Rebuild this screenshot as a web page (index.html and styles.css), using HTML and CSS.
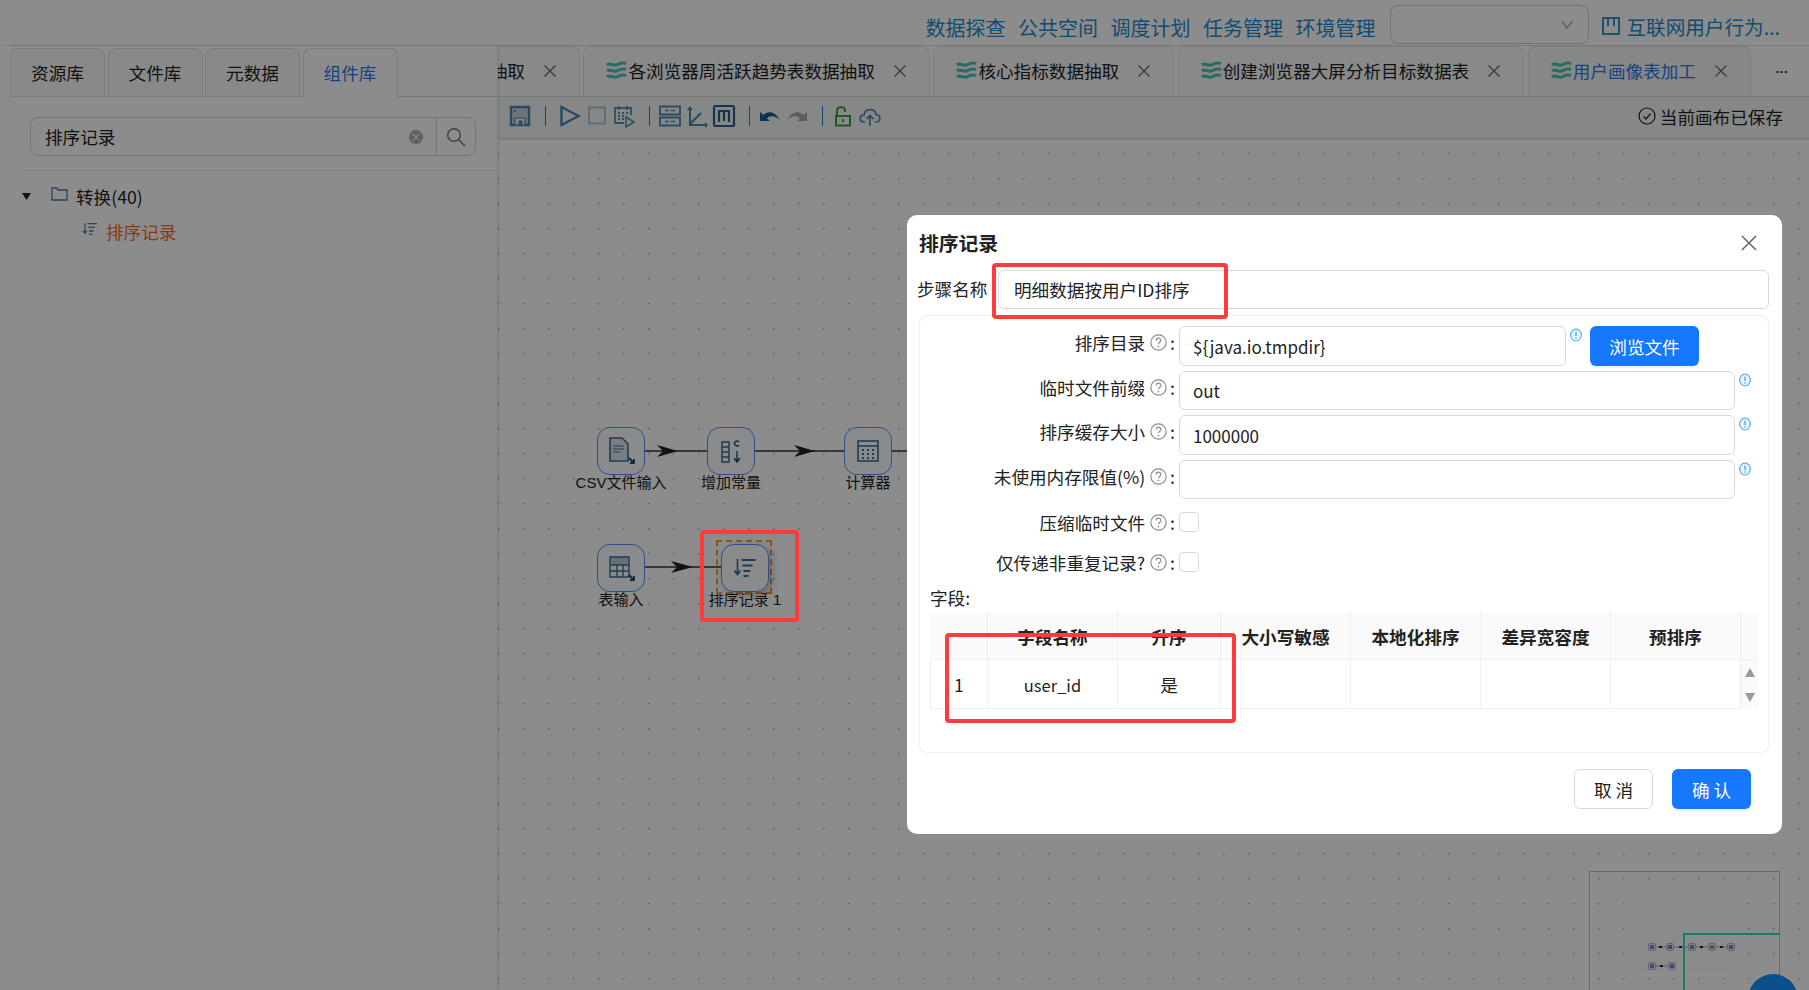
FILE: index.html
```html
<!DOCTYPE html>
<html lang="zh-CN">
<head>
<meta charset="utf-8">
<title>排序记录</title>
<link rel="stylesheet" href="styles.css">
</head>
<body>
<svg class="defs" width="0" height="0">
  <defs>
    <symbol id="wave" viewBox="0 0 21 21">
      <path d="M1 5c3-3 6 1.500 9.500 0S16 2 20 3.500M1 11c3-3 6 1.500 9.500 0S16 8 20 9.500M1 17c3-3 6 1.500 9.500 0s5.500-3 9.500-1.500" fill="none" stroke="#4fc4b4" stroke-width="3.200"/>
    </symbol>
    <symbol id="help" viewBox="0 0 16 16">
      <circle cx="8" cy="8" r="7.200" fill="none" stroke="#8c8c8c" stroke-width="1.100"/>
      <path d="M5.800 6.200c0-3 4.500-3 4.500-.2 0 1.800-2.300 1.700-2.300 3.600" fill="none" stroke="#8c8c8c" stroke-width="1.100"/>
      <circle cx="8" cy="11.800" r=".8" fill="#8c8c8c"/>
    </symbol>
    <symbol id="info" viewBox="0 0 12 14">
      <ellipse cx="6" cy="7" rx="5.300" ry="6" fill="#e8f4ff" stroke="#4aa3f5" stroke-width="1.100"/>
      <path d="M6 3.500v4.500" stroke="#4aa3f5" stroke-width="1.300"/>
      <circle cx="6" cy="10" r=".8" fill="#4aa3f5"/>
    </symbol>
    <symbol id="close" viewBox="0 0 14 14">
      <path d="M1.500 1.500l11 11M12.500 1.500l-11 11" stroke="#666" stroke-width="1.200" fill="none"/>
    </symbol>
    <symbol id="sorti" viewBox="0 0 24 24">
      <path d="M4.500 3v15M1.500 14.500l3 4 3-4" fill="none" stroke="currentColor" stroke-width="1.700"/>
      <path d="M8.500 4h14M9.500 9.500h10M10.500 15h7M10.500 20h5" fill="none" stroke="currentColor" stroke-width="1.900"/>
    </symbol>
  </defs>
</svg>

<div class="page">
  <header class="topbar">
    <nav class="topnav">
      <a>数据探查</a><a>公共空间</a><a>调度计划</a><a>任务管理</a><a>环境管理</a>
    </nav>
    <div class="select">
      <svg width="14" height="9" viewBox="0 0 14 9"><path d="M1.500 1l5.500 7 5.500-7" fill="none" stroke="#aaa" stroke-width="1.300"/></svg>
    </div>
    <div class="project">
      <svg width="18" height="18" viewBox="0 0 18 18"><rect x="1" y="1" width="16" height="16" fill="none" stroke="currentColor" stroke-width="1.800"/><path d="M6 1v8M12 1v8" stroke="currentColor" stroke-width="1.800"/></svg>
      <span>互联网用户行为...</span>
    </div>
  </header>

  <div class="workspace">
    <aside class="side">
      <div class="side-tabs">
        <div class="stab">资源库</div>
        <div class="stab">文件库</div>
        <div class="stab">元数据</div>
        <div class="stab on">组件库</div>
      </div>
      <div class="search">
        <span class="search-text">排序记录</span>
        <span class="search-clear">×</span>
        <span class="search-btn">
          <svg width="20" height="20" viewBox="0 0 20 20"><circle cx="8" cy="8" r="6.300" fill="none" stroke="#777" stroke-width="1.500"/><path d="M12.500 12.500l6.500 6.500" stroke="#777" stroke-width="1.500"/></svg>
        </span>
      </div>
      <div class="side-rule"></div>
      <div class="tree">
        <div class="tree-row">
          <svg class="caret" width="9" height="7" viewBox="0 0 9 7"><path d="M0 0h9L4.500 7z" fill="#222"/></svg>
          <svg class="folder" width="17" height="14" viewBox="0 0 17 14"><path d="M1 13V1h5l1 2h9v10z" fill="none" stroke="#4d7ea8" stroke-width="1.300"/></svg>
          <span>转换(40)</span>
        </div>
        <div class="tree-row leaf">
          <svg class="leaf-icon" width="16" height="16"><use href="#sorti"/></svg>
          <span>排序记录</span>
        </div>
      </div>
    </aside>

    <main class="main">
      <div class="tabs">
        <div class="tab first"><span class="tab-text">数据抽取</span><svg class="x" width="14" height="14"><use href="#close"/></svg></div>
        <div class="tab"><svg width="21" height="21"><use href="#wave"/></svg><span class="tab-text">各浏览器周活跃趋势表数据抽取</span><svg class="x" width="14" height="14"><use href="#close"/></svg></div>
        <div class="tab"><svg width="21" height="21"><use href="#wave"/></svg><span class="tab-text">核心指标数据抽取</span><svg class="x" width="14" height="14"><use href="#close"/></svg></div>
        <div class="tab"><svg width="21" height="21"><use href="#wave"/></svg><span class="tab-text">创建浏览器大屏分析目标数据表</span><svg class="x" width="14" height="14"><use href="#close"/></svg></div>
        <div class="tab on"><svg width="21" height="21"><use href="#wave"/></svg><span class="tab-text">用户画像表加工</span><svg class="x" width="14" height="14"><use href="#close"/></svg></div>
        <span class="more">···</span>
      </div>

      <div class="toolbar">
        <svg class="ti" viewBox="0 0 24 24"><path d="M3 3h18v18H3z" fill="#c9d8e2" stroke="#4e86b2" stroke-width="2.400"/><path d="M7 14h10v7H7z" fill="#f4f8f6" stroke="#4e86b2" stroke-width="1.200"/><path d="M10.500 16.500h4v4.500h-4z" fill="#4e86b2"/><path d="M6 6h2v2H6z" fill="#4e86b2"/></svg>
        <i class="sep first"></i>
        <svg class="ti" viewBox="0 0 24 24"><path d="M3.500 3l17 9-17 9z" fill="none" stroke="#4e86b2" stroke-width="2.400"/></svg>
        <svg class="ti" viewBox="0 0 24 24"><rect x="4" y="3.500" width="16" height="16" fill="none" stroke="#b0c4d2" stroke-width="2"/></svg>
        <svg class="ti" viewBox="0 0 24 24"><path d="M12 19H3V4h16v7" fill="none" stroke="#5d8db2" stroke-width="1.800"/><path d="M7 2v4M15 2v4M6 9h2M10 9h2M14 9h2M6 12h2M10 12h2M6 15h2M10 15h2" stroke="#5d8db2" stroke-width="1.800"/><path d="M14 13l8 5-8 5z" fill="none" stroke="#5d8db2" stroke-width="1.600"/></svg>
        <i class="sep"></i>
        <svg class="ti" viewBox="0 0 24 24"><path d="M2 2.500h20v8H2zM2 13.500h20v8H2z" fill="none" stroke="#4e86b2" stroke-width="1.800"/><path d="M7 6.500h4M13 6.500h4M7 17.500h4M13 17.500h4" stroke="#4e86b2" stroke-width="1.500"/></svg>
        <svg class="ti" viewBox="0 0 24 24"><path d="M5 4v17h16M5 20L16 9" fill="none" stroke="#4e86b2" stroke-width="2"/><path d="M2 6l3-4 3 4zM20 18l3 3-3 3z" fill="#4e86b2"/></svg>
        <svg class="ti" viewBox="0 0 24 24"><rect x="2" y="2" width="20" height="20" rx="1.500" fill="none" stroke="#2a5f8a" stroke-width="2.200"/><path d="M7 18V7h10v11M12 7v10" fill="none" stroke="#2a5f8a" stroke-width="2.200"/></svg>
        <i class="sep"></i>
        <svg class="ti" viewBox="0 0 24 24"><path d="M2 17V8l3.500 3c4-4.500 12-4 16 5-4-4-9-5-12.500-1.500L12 17z" fill="#1f5a8c"/></svg>
        <svg class="ti" viewBox="0 0 24 24"><path d="M22 17V8l-3.500 3c-4-4.500-12-4-16 5 4-4 9-5 12.500-1.500L12 17z" fill="#a9a9a9"/></svg>
        <i class="sep"></i>
        <svg class="ti" viewBox="0 0 24 24"><path d="M6 12V6.500c0-4.500 8-4.500 8 0V8" fill="none" stroke="#2f9a2f" stroke-width="1.800"/><rect x="5" y="12" width="14" height="9.500" fill="none" stroke="#2f9a2f" stroke-width="1.800"/><path d="M12 15v3" stroke="#2f9a2f" stroke-width="1.800"/></svg>
        <svg class="ti" viewBox="0 0 24 24"><path d="M7 18H5.500C1 18 1 11 6 11 7 4 17 4 18 10.500c5 0 5 7.500 .5 7.500H17" fill="none" stroke="#4e86b2" stroke-width="1.700"/><path d="M12 22V12M8.500 15l3.500-3.500 3.500 3.500" fill="none" stroke="#4e86b2" stroke-width="1.700"/></svg>
        <div class="saved">
          <svg width="18" height="18" viewBox="0 0 18 18"><circle cx="9" cy="9" r="8" fill="none" stroke="#222" stroke-width="1.200"/><path d="M5.500 9.500l2.500 2.500 4.500-5.500" fill="none" stroke="#222" stroke-width="1.200"/></svg>
          <span>当前画布已保存</span>
        </div>
      </div>

      <div class="canvas">
        <svg class="edges" width="1311" height="851">
          <path d="M147 312h63M257 312h89M393 312h30M147 428h76" stroke="#333" stroke-width="1.400" fill="none"/>
          <path d="M180 312l-21-6 6 6-6 6zM317 312l-21-6 6 6-6 6zM195 428l-22-6 6 6-6 6z" fill="#222"/>
        </svg>

        <div class="node n1">
          <div class="node-box"><svg width="32" height="32" viewBox="0 0 32 32"><path d="M5 3h12l6 6v17H5z" fill="#dce6f0" stroke="#3d6c90" stroke-width="1.600"/><path d="M8 11h11M8 14h11M8 17h7" stroke="#3d6c90" stroke-width="1.200"/><path d="M24 23l5 5M29 24v4h-4" stroke="#1e4a6c" stroke-width="1.800" fill="none"/></svg></div>
          <span>CSV文件输入</span>
        </div>
        <div class="node n2">
          <div class="node-box"><svg width="32" height="32" viewBox="0 0 32 32"><path d="M7 7h7v20H7zM7 12h7M7 17h7M7 22h7" fill="none" stroke="#3d6c90" stroke-width="1.500"/><path d="M22 16v11M19 23l3 4 3-4M24 7a2.500 2.500 0 1 0 0 3" stroke="#1e4a6c" stroke-width="1.400" fill="none"/></svg></div>
          <span>增加常量</span>
        </div>
        <div class="node n3">
          <div class="node-box"><svg width="32" height="32" viewBox="0 0 32 32"><rect x="6" y="6" width="20" height="20" fill="none" stroke="#3d6c90" stroke-width="1.600"/><path d="M6 11h20" stroke="#3d6c90" stroke-width="1.600"/><path d="M10 15h2M15 15h2M20 15h2M10 19h2M15 19h2M20 19h2M10 23h2M15 23h2M20 23h2" stroke="#3d6c90" stroke-width="1.800"/></svg></div>
          <span>计算器</span>
        </div>
        <div class="node n4">
          <div class="node-box"><svg width="32" height="32" viewBox="0 0 32 32"><path d="M5 5h19v8H5z" fill="#b7cbdb"/><path d="M5 5h19v20H5zM5 13h19M5 19h19M12 13v12M18 13v12" fill="none" stroke="#3d6c90" stroke-width="1.400"/><path d="M24 23l5 5M29 24v4h-4" stroke="#1e4a6c" stroke-width="1.800" fill="none"/></svg></div>
          <span>表输入</span>
        </div>
        <div class="node n5">
          <div class="node-dash"></div>
          <div class="node-box raised"><svg class="sort-big" width="24" height="24"><use href="#sorti"/></svg></div>
          <span>排序记录 1</span>
        </div>

        <div class="mini">
          <div class="mini-map">
            <svg class="mini-links" width="102" height="74"><path d="M23 50h10M41 50h14M63 50h12M83 50h11M23 69h12" stroke="#aaa" stroke-width="1"/><path d="M26 49h3v2h-3zM46 49h3v2h-3zM67 49h3v2h-3zM87 49h3v2h-3zM27 68h3v2h-3z" fill="#222"/></svg>
            <i class="m a"></i><i class="m b"></i><i class="m c"></i><i class="m d green"></i><i class="m e"></i><i class="m f"></i><i class="m g"></i>
          </div>
          <div class="mini-view"></div>
        </div>
        <div class="fab"></div>
      </div>
    </main>
  </div>
</div>

<div class="mask"></div>

<div class="mark mark-node"></div>

<section class="modal">
  <div class="modal-head">
    <h2>排序记录</h2>
    <svg width="18" height="18" viewBox="0 0 14 14"><use href="#close"/></svg>
  </div>
  <div class="step">
    <label>步骤名称</label>
    <div class="input grow">明细数据按用户ID排序</div>
  </div>
  <div class="panel">
    <div class="frow h40">
      <div class="flabel">排序目录<svg width="17" height="17"><use href="#help"/></svg>:</div>
      <div class="input grow">${java.io.tmpdir}</div>
      <svg class="info" width="12" height="14"><use href="#info"/></svg>
      <button class="btn primary browse">浏览文件</button>
    </div>
    <div class="frow">
      <div class="flabel">临时文件前缀<svg width="17" height="17"><use href="#help"/></svg>:</div>
      <div class="input grow">out</div>
      <svg class="info" width="12" height="14"><use href="#info"/></svg>
    </div>
    <div class="frow h40">
      <div class="flabel">排序缓存大小<svg width="17" height="17"><use href="#help"/></svg>:</div>
      <div class="input grow">1000000</div>
      <svg class="info" width="12" height="14"><use href="#info"/></svg>
    </div>
    <div class="frow">
      <div class="flabel">未使用内存限值(%)<svg width="17" height="17"><use href="#help"/></svg>:</div>
      <div class="input grow"></div>
      <svg class="info" width="12" height="14"><use href="#info"/></svg>
    </div>
    <div class="frow chk first-chk">
      <div class="flabel">压缩临时文件<svg width="17" height="17"><use href="#help"/></svg>:</div>
      <span class="checkbox"></span>
    </div>
    <div class="frow chk">
      <div class="flabel">仅传递非重复记录?<svg width="17" height="17"><use href="#help"/></svg>:</div>
      <span class="checkbox"></span>
    </div>
    <div class="fields-label">字段:</div>
    <table class="grid">
      <colgroup><col class="c0"><col class="c1"><col class="c2"><col class="c3"><col class="c3"><col class="c3"><col class="c3"><col class="c4"></colgroup>
      <thead>
        <tr><th></th><th>字段名称</th><th>升序</th><th>大小写敏感</th><th>本地化排序</th><th>差异宽容度</th><th>预排序</th><th class="bar"></th></tr>
      </thead>
      <tbody>
        <tr>
          <td class="idx">1</td><td class="latin">user_id</td><td>是</td><td></td><td></td><td></td><td></td>
          <td class="bar">
            <div class="scroll">
              <svg width="10" height="9" viewBox="0 0 10 9"><path d="M5 0l5 9H0z" fill="#999"/></svg>
              <svg width="10" height="9" viewBox="0 0 10 9"><path d="M5 9L0 0h10z" fill="#999"/></svg>
            </div>
          </td>
        </tr>
      </tbody>
    </table>
  </div>
  <div class="modal-foot">
    <button class="btn ghost">取 消</button>
    <button class="btn primary">确 认</button>
  </div>
  <div class="mark mark-step"></div>
  <div class="mark mark-row"></div>
</section>
</body>
</html>
```
FILE: styles.css
```css
* { box-sizing: border-box; }
html, body { margin: 0; height: 100%; overflow: hidden; }
body {
  font-family: "Noto Sans CJK SC", "Noto Sans", sans-serif;
  font-size: 17.6px;
  color: #222;
  background: #fff;
}
.defs { position: absolute; }
.page { height: 990px; display: flex; flex-direction: column; }

.topbar {
  height: 46px;
  margin-left: 10px;
  padding-right: 29px;
  border-bottom: 1px solid #ddd;
  display: flex;
  align-items: center;
  justify-content: flex-end;
  flex: none;
}
.topnav { display: flex; gap: 12.500px; font-size: 20px; color: #2589cc; margin-right: 14px; padding-top: 9px; }
.select {
  width: 199px;
  height: 39px;
  margin-top: 4px;
  border: 1px solid #d0d0d0;
  border-radius: 8px;
  display: flex;
  align-items: center;
  justify-content: flex-end;
  padding-right: 14px;
}
.project { display: flex; align-items: center; gap: 7px; margin-left: 13px; font-size: 19.600px; color: #2589cc; white-space: nowrap; padding-top: 7px; }

.workspace { flex: 1; display: flex; min-height: 0; }
.side {
  width: 498px;
  flex: none;
  border-right: 1px solid #e4e4e4;
  box-shadow: 1px 0 3px rgba(0,0,0,.08);
  position: relative;
  z-index: 1;
  background: #fff;
}
.side-tabs {
  height: 51px;
  margin-left: 10px;
  padding-top: 2px;
  border-bottom: 1px solid #d9d9d9;
  display: flex;
  gap: 2.500px;
}
.stab {
  width: 95px;
  height: 49px;
  background: #fafafa;
  border: 1px solid #e0e0e0;
  border-radius: 8px 8px 0 0;
  display: flex;
  align-items: center;
  justify-content: center;
}
.stab.on { background: #fff; border-bottom-color: #fff; color: #2a7ae8; }

.search {
  margin: 20px 0 0 30px;
  width: 446px;
  height: 39px;
  border: 1px solid #d4d4d4;
  border-radius: 8px;
  display: flex;
  align-items: center;
  padding-left: 14px;
}
.search-text { flex: 1; }
.search-clear {
  width: 14px; height: 14px;
  border-radius: 50%;
  background: #b0b0b0;
  color: #fff;
  font-size: 12px;
  line-height: 14px;
  text-align: center;
  margin-right: 13px;
}
.search-btn {
  width: 39px;
  height: 37px;
  border-left: 1px solid #d4d4d4;
  display: flex;
  align-items: center;
  justify-content: center;
}
.side-rule { height: 1px; background: #ebebeb; margin: 14px 0 0 24px; }
.tree { padding: 8px 0 0 22px; }
.tree-row { height: 35px; display: flex; align-items: center; }
.caret { margin-right: 20px; }
.folder { margin-right: 8px; margin-top: -5px; }
.tree-row.leaf { padding-left: 60px; color: #f5701a; }
.leaf-icon { margin-right: 8px; margin-top: -5px; color: #4d7ea8; }

.main { flex: 1; min-width: 0; display: flex; flex-direction: column; }
.tabs {
  height: 51px;
  display: flex;
  gap: 3.600px;
  border-bottom: 1px solid #d9d9d9;
  overflow: hidden;
  align-items: stretch;
  flex: none;
}
.tab {
  flex: none;
  height: 51px;
  padding: 0 22px 2px;
  display: flex;
  align-items: center;
  background: #fafafa;
  border: 1px solid #e4e4e4;
  border-radius: 8px 8px 0 0;
}
.tab.first { margin-left: -89.500px; padding-left: 44px; }
.tab-text { margin-left: 1px; }
.tab .x { margin-left: 18px; }
.tab.on { background: #f4f8f6; color: #2a7ae8; border-bottom-color: #f4f8f6; }
.more { margin-left: 21px; align-self: center; font-family: "Liberation Sans", sans-serif; font-size: 13px; font-weight: 700; }

.toolbar {
  height: 43px;
  flex: none;
  background: #f4f8f6;
  border-bottom: 3px solid #e6e6e6;
  display: flex;
  align-items: center;
  gap: 3px;
  padding: 0 26px 2px 10px;
}
.ti { width: 24px; height: 24px; flex: none; }
.sep { width: 1px; height: 20px; background: #2a86d8; margin: 0 5px 0 10px; flex: none; }
.sep.first { margin-right: 9px; }
.saved { margin-left: auto; display: flex; align-items: center; gap: 4px; }

.canvas {
  flex: 1;
  position: relative;
  overflow: hidden;
  background-color: #fff;
  background-image: radial-gradient(circle at 0.75px 0.75px, #aaa 0.6px, transparent 1px);
  background-size: 25px 25px;
  background-position: 0 13px;
}
.edges { position: absolute; left: 0; top: -1px; }
.node { position: absolute; width: 130px; display: flex; flex-direction: column; align-items: center; font-family: "Liberation Sans", "Noto Sans CJK SC", sans-serif; font-size: 15px; line-height: 20px; white-space: nowrap; }
.node-box {
  width: 48px; height: 48px;
  border: 1.500px solid #5b8ff9;
  border-radius: 13px;
  background: #fcfdff;
  display: flex; align-items: center; justify-content: center;
  position: relative;
  margin-bottom: -2.500px;
}
.node-box.raised { box-shadow: 3px 3px 8px rgba(0,0,0,.25); }
.sort-big { color: #3d6c90; }
.n1 { left: 58px; top: 287px; }
.n2 { left: 168px; top: 287px; }
.n3 { left: 305px; top: 287px; }
.n4 { left: 58px; top: 404px; }
.n5 { left: 182px; top: 404px; }
.node-dash {
  position: absolute;
  left: 36px; top: -4px;
  width: 56px; height: 54px;
  border: 2px dashed #f0a040;
}

.mini {
  position: absolute;
  left: 1091px; top: 731px;
  width: 191px;
  height: 131px;
  border: 1px solid #8fd0ff;
  border-bottom: 0;
}
.mini-map {
  position: absolute;
  left: 43px; top: 25px;
  width: 102px; height: 74px;
  background: #fdfdfd;
}
.mini-links { position: absolute; left: 0; top: 0; }
.m { position: absolute; width: 8px; height: 8px; border: 1px solid #a8b8e8; background: #eef1f6; border-radius: 2px; }
.m::after { content: ""; position: absolute; left: 1px; top: 1px; width: 4px; height: 4px; background: #7a8a9a; }
.m.a { left: 15px; top: 46px; }
.m.b { left: 33px; top: 46px; }
.m.c { left: 55px; top: 46px; }
.m.d { left: 75px; top: 46px; }
.m.green::after { background: #8fb060; }
.m.e { left: 94px; top: 46px; }
.m.f { left: 15px; top: 65px; }
.m.g { left: 35px; top: 65px; }
.mini-view {
  position: absolute;
  left: 93px; top: 61px;
  width: 97px;
  height: 70px;
  border-top: 2px solid #2de0c8;
  border-left: 2px solid #2de0c8;
}
.fab {
  position: absolute;
  left: 1250px; top: 834px;
  width: 50px; height: 50px;
  border-radius: 50%;
  background: #1590ff;
}

.mask { position: fixed; inset: 0; background: rgba(0,0,0,.45); z-index: 10; }
.mark { position: absolute; border: 4px solid #ff3b3b; border-radius: 4px; z-index: 30; pointer-events: none; }
.mark-node { left: 700px; top: 530px; width: 99px; height: 92px; }
.mark-step { left: 85px; top: 48px; width: 236px; height: 56px; }
.mark-row { left: 38px; top: 418px; width: 291px; height: 90px; }

.modal {
  position: absolute;
  left: 907px; top: 215px;
  width: 875px; height: 619px;
  background: #fff;
  border-radius: 10px;
  padding: 0 13px 0 12px;
  z-index: 20;
}
.modal-head { height: 55px; display: flex; align-items: center; justify-content: space-between; padding-right: 11px; }
.modal-head h2 { margin: 0; font-size: 19.800px; font-weight: 600; }
.step { display: flex; align-items: center; }
.step label { width: 81px; margin-left: -2px; padding-bottom: 3px; white-space: nowrap; flex: none; }
.input {
  height: 100%;
  border: 1px solid #d9d9d9;
  border-radius: 6px;
  padding: 0 13px;
  display: flex;
  align-items: center;
  background: #fff;
  white-space: nowrap;
  font-size: 17px;
}
.step .input { height: 39px; padding-left: 15px; font-size: 17.600px; }
.grow { flex: 1; min-width: 0; }
.panel {
  margin-top: 6px;
  height: 438px;
  border: 1px solid #f0f0f0;
  border-radius: 8px;
  padding: 10px 10px 0 10px;
}
.frow { height: 39px; display: flex; margin-bottom: 5px; padding-right: 7px; }
.frow.h40 { height: 40px; }
.flabel {
  width: 245px;
  margin-right: 4px;
  flex: none;
  display: flex;
  align-items: center;
  justify-content: flex-end;
  height: 33px;
  white-space: nowrap;
}
.flabel svg { margin: 0 3px 0 5px; }
.info { margin: 2px 0 0 4px; flex: none; }
.btn { font-family: inherit; font-size: 17.600px; border-radius: 6px; height: 40px; cursor: pointer; }
.primary { background: #1677ff; border: 0; color: #fff; box-shadow: 0 2px 0 rgba(5,145,255,.1); }
.browse { width: 109px; margin: 0 52px 0 8px; flex: none; }
.frow.chk { height: 40px; margin: 0; align-items: center; }
.frow.first-chk { margin-top: -2px; }
.frow.chk .flabel { height: 40px; }
.checkbox { width: 20px; height: 20px; border: 1px solid #d9d9d9; border-radius: 4px; background: #fff; }
.fields-label { height: 24px; margin-top: 4px; line-height: 24px; }
.grid {
  table-layout: fixed;
  width: 828px;
  border-collapse: separate;
  border-spacing: 0;
  margin-top: 2px;
}
.c0 { width: 58px; } .c1 { width: 130px; } .c2 { width: 103px; } .c3 { width: 130px; } .c4 { width: 17px; }
.grid th {
  height: 48px;
  background: #fafafa;
  font-weight: 600;
  border-right: 1px solid #f0f0f0;
  border-bottom: 1px solid #f0f0f0;
  padding: 2px 0 0;
}
.grid th:first-child { border-radius: 8px 0 0 0; }
.grid th.bar { border-right: 0; border-radius: 0 8px 0 0; }
.grid td {
  height: 49px;
  text-align: center;
  border-right: 1px solid #f0f0f0;
  border-bottom: 1px solid #f0f0f0;
  padding: 1px 0 0;
}
.grid td:first-child { border-left: 1px solid #f0f0f0; }
.grid td.idx { text-align: left; padding-left: 23px; }
.grid td.latin { font-size: 16.500px; }
.grid td.bar { border: 0; background: #fafafa; }
.scroll { display: flex; flex-direction: column; align-items: center; gap: 16px; }
.modal-foot { display: flex; justify-content: flex-end; gap: 19px; margin-top: 16px; padding-right: 18px; }
.modal-foot .btn { width: 79px; }
.ghost { background: #fff; border: 1px solid #d9d9d9; color: #222; }
```
